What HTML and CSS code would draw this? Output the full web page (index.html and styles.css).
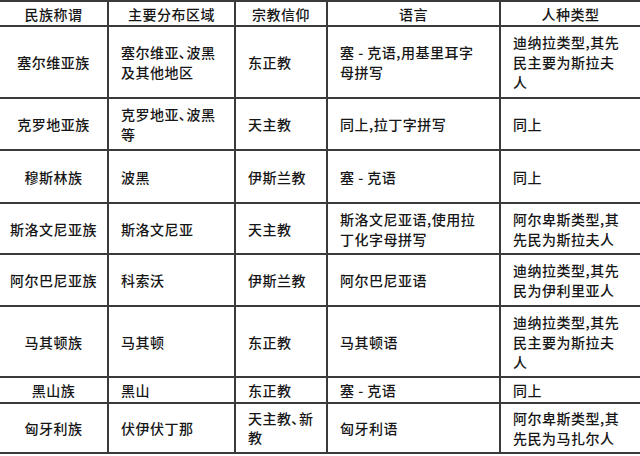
FILE: index.html
```html
<!DOCTYPE html>
<html lang="zh">
<head>
<meta charset="utf-8">
<title>民族概况表</title>
<link rel="stylesheet" href="styles.css">
</head>
<body>
<table class="tbl">
  <colgroup>
    <col class="c1"><col class="c2"><col class="c3"><col class="c4"><col class="c5">
  </colgroup>
  <tr class="hd">
    <th>民族称谓</th><th>主要分布区域</th><th>宗教信仰</th><th>语言</th><th>人种类型</th>
  </tr>
  <tr class="r1">
    <td class="nm">塞尔维亚族</td>
    <td>塞尔维亚､波黑<br>及其他地区</td>
    <td>东正教</td>
    <td>塞 - 克语,用基里耳字<br>母拼写</td>
    <td>迪纳拉类型,其先<br>民主要为斯拉夫<br>人</td>
  </tr>
  <tr class="r2">
    <td class="nm">克罗地亚族</td>
    <td>克罗地亚､波黑<br>等</td>
    <td>天主教</td>
    <td>同上,拉丁字拼写</td>
    <td>同上</td>
  </tr>
  <tr class="r3">
    <td class="nm">穆斯林族</td>
    <td>波黑</td>
    <td>伊斯兰教</td>
    <td>塞 - 克语</td>
    <td>同上</td>
  </tr>
  <tr class="r4">
    <td class="nm">斯洛文尼亚族</td>
    <td>斯洛文尼亚</td>
    <td>天主教</td>
    <td>斯洛文尼亚语,使用拉<br>丁化字母拼写</td>
    <td>阿尔卑斯类型,其<br>先民为斯拉夫人</td>
  </tr>
  <tr class="r5">
    <td class="nm">阿尔巴尼亚族</td>
    <td>科索沃</td>
    <td>伊斯兰教</td>
    <td>阿尔巴尼亚语</td>
    <td>迪纳拉类型,其先<br>民为伊利里亚人</td>
  </tr>
  <tr class="r6">
    <td class="nm">马其顿族</td>
    <td>马其顿</td>
    <td>东正教</td>
    <td>马其顿语</td>
    <td>迪纳拉类型,其先<br>民主要为斯拉夫<br>人</td>
  </tr>
  <tr class="r7">
    <td class="nm">黑山族</td>
    <td>黑山</td>
    <td>东正教</td>
    <td>塞 - 克语</td>
    <td>同上</td>
  </tr>
  <tr class="r8">
    <td class="nm">匈牙利族</td>
    <td>伏伊伏丁那</td>
    <td class="tight">天主教､新<br>教</td>
    <td>匈牙利语</td>
    <td>阿尔卑斯类型,其<br>先民为马扎尔人</td>
  </tr>
</table>
</body>
</html>
```
FILE: styles.css
```css
html, body {
  margin: 0;
  padding: 0;
  background: #ffffff;
}
body {
  width: 640px;
  height: 456px;
  overflow: hidden;
  font-family: "Noto Sans CJK SC", "Noto Sans", sans-serif;
  color: #161616;
}
.tbl {
  width: 640px;
  table-layout: fixed;
  border-collapse: collapse;
  font-size: 14px;
  letter-spacing: 0.5px;
  line-height: 20px;
  font-weight: 500;
}
.c1 { width: 108px; }
.c2 { width: 127px; }
.c3 { width: 92px; }
.c4 { width: 173px; }
.c5 { width: 140px; }
.tbl th,
.tbl td {
  border: 2px solid #3a3a3a;
  padding: 0 4px 0 12px;
  vertical-align: middle;
  text-align: left;
  white-space: nowrap;
  overflow: hidden;
}
.tbl th {
  font-weight: 500;
  text-align: center;
  padding: 0;
}
.tbl tr > :first-child { border-left: none; }
.tbl tr > :last-child { border-right: none; }
.tbl td.nm {
  text-align: center;
  padding: 0;
}
.tbl td.tight { line-height: 19px; }
.hd { height: 25px; }
.r1 { height: 72px; }
.r2 { height: 52px; }
.r3 { height: 53px; }
.r4 { height: 51px; }
.r5 { height: 52px; }
.r6 { height: 71px; }
.r7 { height: 26px; }
.r8 { height: 50px; }
```
